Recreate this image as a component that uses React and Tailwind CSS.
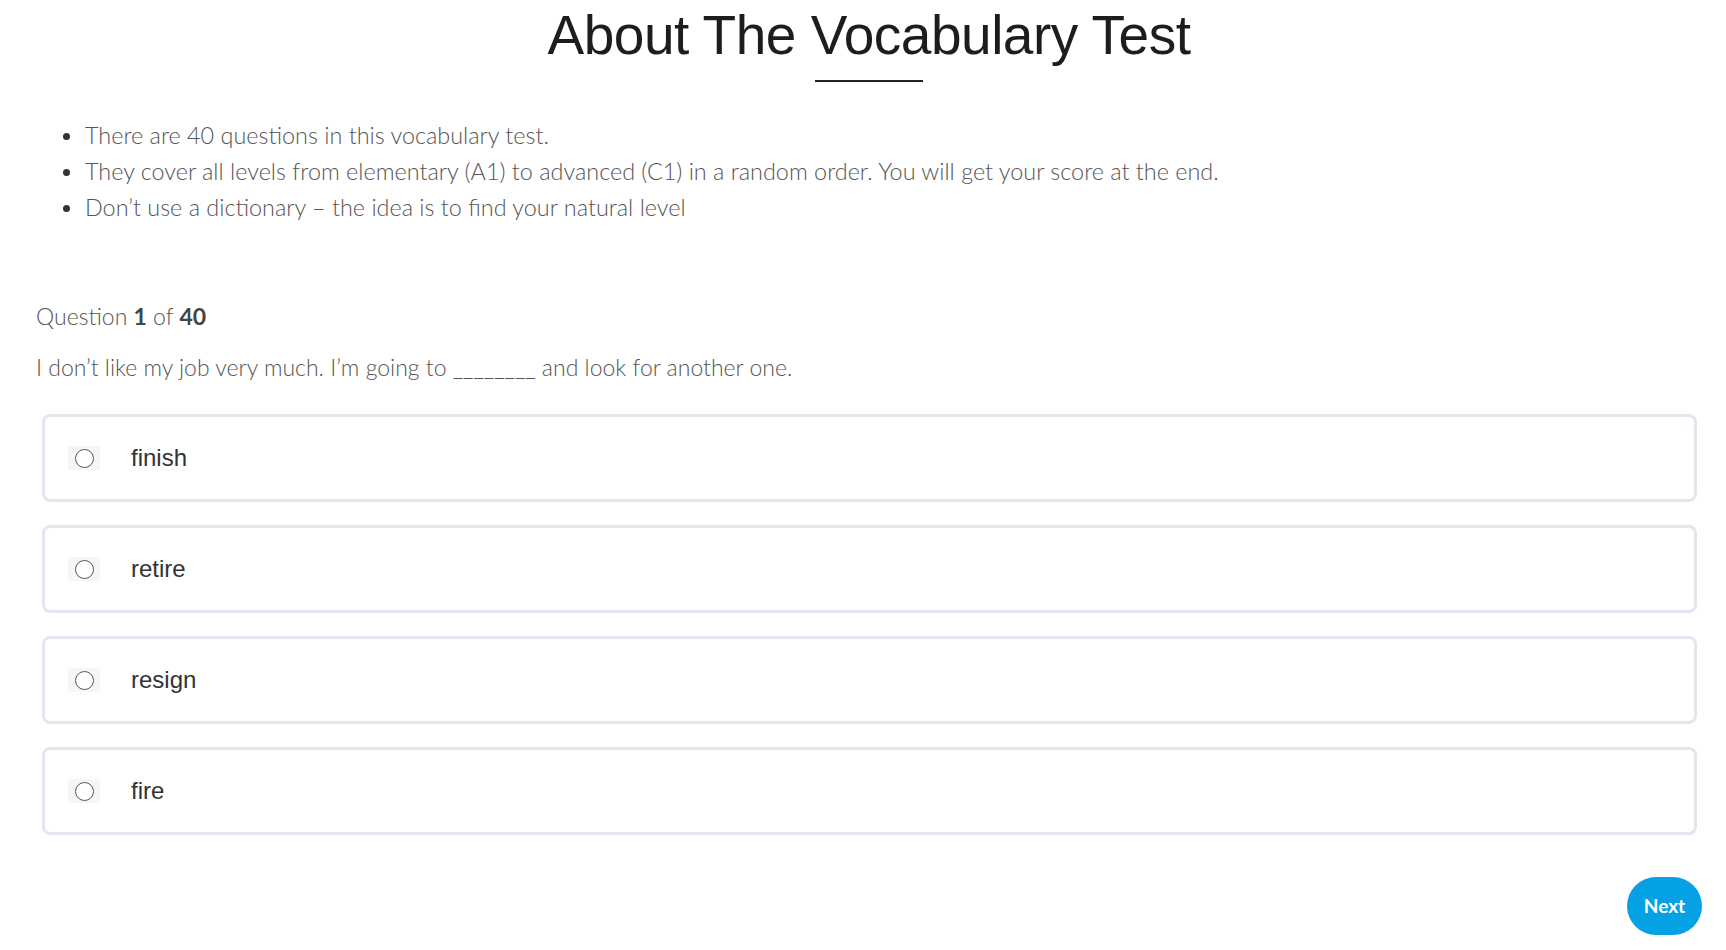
import React from 'react';

const bullets = [
    'There are 40 questions in this vocabulary test.',
    'They cover all levels from elementary (A1) to advanced (C1) in a random order. You will get your score at the end.',
    'Don’t use a dictionary – the idea is to find your natural level',
];

const options = ['finish', 'retire', 'resign', 'fire'];

const App = () => {
    return (
        <div className="min-h-screen bg-white pl-[36px] pr-[24px] font-['Lato','Noto_Sans',sans-serif]">
            <header className="pt-[8px] flex flex-col items-center">
                <h1 className="text-[55px] leading-none font-normal text-[#1d1d1d] tracking-[-0.5px] font-['Liberation_Sans','Arial',sans-serif]">
                    About The Vocabulary Test
                </h1>
                <div className="mt-[17px] h-[2px] w-[108px] bg-[#222]" />
            </header>

            <ul className="mt-[36px]">
                {bullets.map((text, i) => (
                    <li key={i} className="flex items-center h-[36px]">
                        <span className="ml-[27px] w-[7px] h-[7px] rounded-full bg-[#333] shrink-0" />
                        <span className="ml-[15px] text-[23.4px] font-light text-[#555]">{text}</span>
                    </li>
                ))}
            </ul>

            <div className="mt-[75px] h-[30px] flex items-center text-[23px] font-light text-[#555]">
                <span>
                    Question <b className="font-bold text-[#444]">1</b> of <b className="font-bold text-[#444]">40</b>
                </span>
            </div>

            <p className="mt-[21px] h-[30px] flex items-center text-[23px] font-light text-[#555]">
                I don’t like my job very much. I’m going to ________ and look for another one.
            </p>

            <div className="mt-[32px] ml-[6px] mr-[5px] flex flex-col gap-[23px]">
                {options.map((opt) => (
                    <label
                        key={opt}
                        className="h-[88px] flex items-center border-[3px] border-[#e2e6ee] rounded-[8px] pl-[23px] cursor-pointer"
                    >
                        <span className="w-[32px] h-[24px] bg-[#f6f6f6] flex justify-center pt-[3px]">
                            <span className="w-[19px] h-[19px] rounded-full border-[1.5px] border-[#555] bg-white" />
                        </span>
                        <span className="ml-[31px] text-[24px] text-[#333] font-['Liberation_Sans','Arial',sans-serif]">{opt}</span>
                    </label>
                ))}
            </div>

            <div className="mt-[42px] flex justify-end">
                <button className="w-[75px] h-[58px] rounded-full bg-[#04a2e4] text-white text-[19px] font-bold">
                    Next
                </button>
            </div>
        </div>
    );
};

export default App;
